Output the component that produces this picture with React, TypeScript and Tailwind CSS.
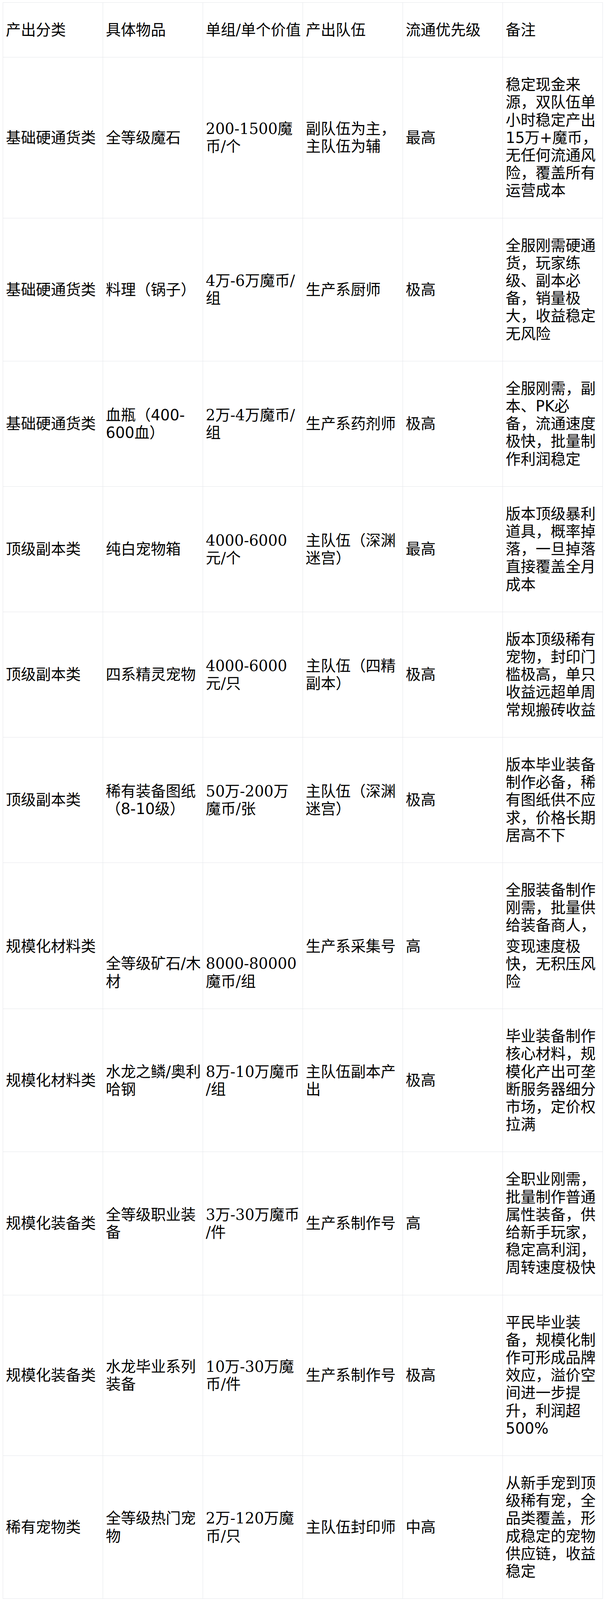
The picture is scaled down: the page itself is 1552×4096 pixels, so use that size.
import React from "react";

const SANS = "font-['DejaVu_Sans','Noto_Sans_CJK_SC',sans-serif]";
const SERIF = "font-['DejaVu_Serif','Noto_Sans_CJK_SC',serif]";

const header = ["产出分类", "具体物品", "单组/单个价值", "产出队伍", "流通优先级", "备注"];

const rows: string[][][] = [
  [
    ["基础硬通货类"],
    ["全等级魔石"],
    ["200-1500魔", "币/个"],
    ["副队伍为主，", "主队伍为辅"],
    ["最高"],
    ["稳定现金来", "源，双队伍单", "小时稳定产出", "15万+魔币，", "无任何流通风", "险，覆盖所有", "运营成本"],
  ],
  [
    ["基础硬通货类"],
    ["料理（锅子）"],
    ["4万-6万魔币/", "组"],
    ["生产系厨师"],
    ["极高"],
    ["全服刚需硬通", "货，玩家练", "级、副本必", "备，销量极", "大，收益稳定", "无风险"],
  ],
  [
    ["基础硬通货类"],
    ["血瓶（400-", "600血）"],
    ["2万-4万魔币/", "组"],
    ["生产系药剂师"],
    ["极高"],
    ["全服刚需，副", "本、PK必", "备，流通速度", "极快，批量制", "作利润稳定"],
  ],
  [
    ["顶级副本类"],
    ["纯白宠物箱"],
    ["4000-6000", "元/个"],
    ["主队伍（深渊", "迷宫）"],
    ["最高"],
    ["版本顶级暴利", "道具，概率掉", "落，一旦掉落", "直接覆盖全月", "成本"],
  ],
  [
    ["顶级副本类"],
    ["四系精灵宠物"],
    ["4000-6000", "元/只"],
    ["主队伍（四精", "副本）"],
    ["极高"],
    ["版本顶级稀有", "宠物，封印门", "槛极高，单只", "收益远超单周", "常规搬砖收益"],
  ],
  [
    ["顶级副本类"],
    ["稀有装备图纸", "（8-10级）"],
    ["50万-200万", "魔币/张"],
    ["主队伍（深渊", "迷宫）"],
    ["极高"],
    ["版本毕业装备", "制作必备，稀", "有图纸供不应", "求，价格长期", "居高不下"],
  ],
  [
    ["规模化材料类"],
    ["全等级矿石/木", "材"],
    ["8000-80000", "魔币/组"],
    ["生产系采集号"],
    ["高"],
    ["全服装备制作", "刚需，批量供", "给装备商人，", "变现速度极", "快，无积压风", "险"],
  ],
  [
    ["规模化材料类"],
    ["水龙之鳞/奥利", "哈钢"],
    ["8万-10万魔币", "/组"],
    ["主队伍副本产", "出"],
    ["极高"],
    ["毕业装备制作", "核心材料，规", "模化产出可垄", "断服务器细分", "市场，定价权", "拉满"],
  ],
  [
    ["规模化装备类"],
    ["全等级职业装", "备"],
    ["3万-30万魔币", "/件"],
    ["生产系制作号"],
    ["高"],
    ["全职业刚需，", "批量制作普通", "属性装备，供", "给新手玩家，", "稳定高利润，", "周转速度极快"],
  ],
  [
    ["规模化装备类"],
    ["水龙毕业系列", "装备"],
    ["10万-30万魔", "币/件"],
    ["生产系制作号"],
    ["极高"],
    ["平民毕业装", "备，规模化制", "作可形成品牌", "效应，溢价空", "间进一步提", "升，利润超", "500%"],
  ],
  [
    ["稀有宠物类"],
    ["全等级热门宠", "物"],
    ["2万-120万魔", "币/只"],
    ["主队伍封印师"],
    ["中高"],
    ["从新手宠到顶", "级稀有宠，全", "品类覆盖，形", "成稳定的宠物", "供应链，收益", "稳定"],
  ],
];

// Row 7 (index 6) has its cells pushed off-centre in the reference.
const specialOffsets = ["mt-[55px]", "mt-[188px]", "mt-[188px]", "mt-[55px]", "mt-[55px]", ""];

const cellBase =
  "border border-gray-200 px-[7px] py-[47px] align-middle text-[38.4px] leading-[45.2px] text-black whitespace-nowrap overflow-visible";

export default function App() {
  return (
    <div className="min-h-[4096px] w-[1552px] bg-white pl-[7px] pt-[6px]">
      <table className="w-[1537px] table-fixed border-collapse">
        <colgroup>
          {header.map((_, i) => (
            <col key={i} className="w-[256px]" />
          ))}
        </colgroup>
        <thead>
          <tr>
            {header.map((h, i) => (
              <th key={i} className={`${cellBase} ${i === 2 ? SERIF : SANS} text-left font-normal`}>
                {h}
              </th>
            ))}
          </tr>
        </thead>
        <tbody>
          {rows.map((row, ri) => (
            <tr key={ri}>
              {row.map((lines, ci) => (
                <td key={ci} className={`${cellBase} ${ci === 2 ? SERIF : SANS}`}>
                  <div className={ri === 6 ? specialOffsets[ci] : ""}>
                    {lines.map((l, li) => (
                      <div key={li} className={ri === 6 && ci === 5 && li === 3 ? "mt-[8px]" : ""}>
                        {l}
                      </div>
                    ))}
                  </div>
                </td>
              ))}
            </tr>
          ))}
        </tbody>
      </table>
    </div>
  );
}
